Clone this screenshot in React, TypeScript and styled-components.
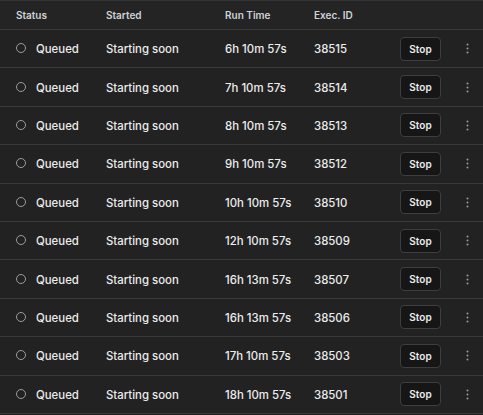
import React from "react";
import styled, { createGlobalStyle } from "styled-components";

const Global = createGlobalStyle`
  html, body { margin: 0; padding: 0; background: #1c1c1c; }
  body { font-family: Inter, "Noto Sans", sans-serif; -webkit-font-smoothing: antialiased; }
`;

const Table = styled.div`
  width: 483px;
  background: #222222;
  border-top: 1px solid #333;
`;

const cols = "106px 119px 89px 86px 52px 31px";

const HeaderRow = styled.div`
  display: grid;
  grid-template-columns: ${cols};
  align-items: center;
  height: 29px;
  border-bottom: 1px solid #3a3a3a;
  background: #242424;
  box-sizing: border-box;
`;

const HeadCell = styled.div`
  font-size: 10px;
  font-weight: 600;
  color: #cfd3d8;
  padding-left: 16px;
  &:not(:first-child) { padding-left: 0; }
`;

const Row = styled.div`
  display: grid;
  grid-template-columns: ${cols};
  align-items: center;
  height: 38.4px;
  box-sizing: border-box;
  border-bottom: 1px solid #3a3a3a;
`;

const Cell = styled.div`
  font-size: 11.4px;
  font-weight: 500;
  color: #ececec;
  white-space: nowrap;
  padding-top: 1px;
`;

const StatusCell = styled(Cell)`
  display: flex;
  align-items: center;
  gap: 10px;
  padding-left: 16px;
`;

const Circle = styled.span`
  box-sizing: border-box;
  width: 10px;
  height: 10px;
  border-radius: 50%;
  border: 1.5px solid #9c9c9c;
  display: inline-block;
  margin-top: -2px;
  flex-shrink: 0;
`;

const StopButton = styled.button`
  width: 41px;
  height: 24px;
  background: #161616;
  border: 1px solid #3e3e3e;
  border-radius: 4px;
  color: #ececec;
  font-family: Inter, "Noto Sans", sans-serif;
  font-size: 10px;
  font-weight: 600;
  padding: 0;
  cursor: pointer;
`;

const Dots = styled.div`
  display: flex;
  justify-content: center;
  color: #9a9a9a;
`;

const rows = [
  ["6h 10m 57s", "38515"],
  ["7h 10m 57s", "38514"],
  ["8h 10m 57s", "38513"],
  ["9h 10m 57s", "38512"],
  ["10h 10m 57s", "38510"],
  ["12h 10m 57s", "38509"],
  ["16h 13m 57s", "38507"],
  ["16h 13m 57s", "38506"],
  ["17h 10m 57s", "38503"],
  ["18h 10m 57s", "38501"],
];

const DotsIcon = () => (
  <svg width="3" height="11" viewBox="0 0 3 11">
    <circle cx="1.5" cy="1.5" r="1" fill="currentColor" />
    <circle cx="1.5" cy="5.5" r="1" fill="currentColor" />
    <circle cx="1.5" cy="9.5" r="1" fill="currentColor" />
  </svg>
);

export default function App() {
  return (
    <>
      <Global />
      <Table>
        <HeaderRow>
          <HeadCell>Status</HeadCell>
          <HeadCell>Started</HeadCell>
          <HeadCell>Run Time</HeadCell>
          <HeadCell>Exec. ID</HeadCell>
          <HeadCell />
          <HeadCell />
        </HeaderRow>
        {rows.map(([t, id]) => (
          <Row key={id}>
            <StatusCell>
              <Circle />
              Queued
            </StatusCell>
            <Cell>Starting soon</Cell>
            <Cell>{t}</Cell>
            <Cell>{id}</Cell>
            <div>
              <StopButton>Stop</StopButton>
            </div>
            <Dots>
              <DotsIcon />
            </Dots>
          </Row>
        ))}
      </Table>
    </>
  );
}
